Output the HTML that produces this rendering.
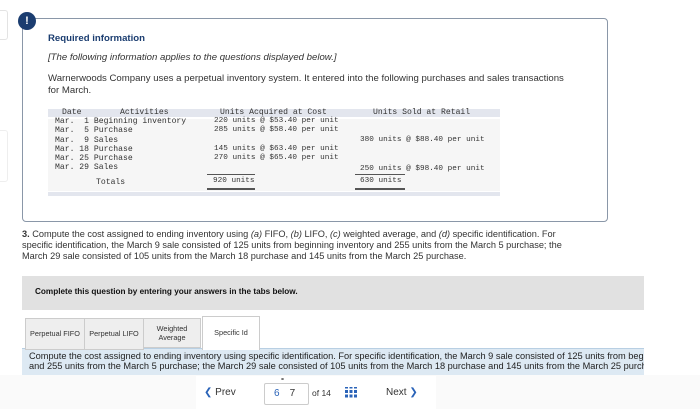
<!DOCTYPE html>
<html><head><style>
body{margin:0;width:700px;height:409px;background:#fff;position:relative;overflow:hidden;font-family:"Liberation Sans",sans-serif;color:#333}
.a{position:absolute}
.m{font-family:"Liberation Mono",monospace;font-size:8.1px;color:#333;white-space:pre}
.t{font-size:9.6px;color:#333}
</style></head><body>
<div class="a" style="left:-4px;top:10px;width:10px;height:28px;border:1px solid #e3e3e3;border-radius:3px"></div>
<div class="a" style="left:-4px;top:130px;width:10px;height:50px;border:1px solid #eee;border-radius:3px"></div>
<div class="a" style="left:22px;top:18px;width:584px;height:202px;border:1px solid #8a97a8;border-radius:4px"></div>
<div class="a" style="left:18px;top:12px;width:18px;height:18px;border-radius:50%;background:#1b3d70;color:#fff;font-weight:bold;font-size:11px;text-align:center;line-height:18px">!</div>
<div class="a" style="left:48px;top:33px;font-size:9.6px;font-weight:bold;color:#1b3d70">Required information</div>
<div class="a t" style="left:48px;top:52px;font-style:italic">[The following information applies to the questions displayed below.]</div>
<div class="a t" style="left:48px;top:73px;width:545px;line-height:11.5px;white-space:nowrap">Warnerwoods Company uses a perpetual inventory system. It entered into the following purchases and sales transactions<br>for March.</div>
<div class="a" style="left:48px;top:109px;width:452px;height:8px;background:#e3e6ee"></div>
<div class="a" style="left:48px;top:119px;width:452px;height:72px;background:#f6f6f6"></div>
<div class="a" style="left:48px;top:192px;width:452px;height:4px;background:#e3e6ee"></div>
<div class="a m" style="left:62px;top:108px">Date</div>
<div class="a m" style="left:120px;top:108px">Activities</div>
<div class="a m" style="left:220px;top:108px">Units Acquired at Cost</div>
<div class="a m" style="left:373px;top:108px">Units Sold at Retail</div>
<div class="a m" style="left:55px;top:117px;line-height:9.3px">Mar.  1 Beginning inventory
Mar.  5 Purchase
Mar.  9 Sales
Mar. 18 Purchase
Mar. 25 Purchase
Mar. 29 Sales</div>
<div class="a m" style="left:96px;top:178px">Totals</div>
<div class="a m" style="left:214px;top:117px;line-height:9.3px;font-size:7.7px">220 units @ $53.40 per unit
285 units @ $58.40 per unit

145 units @ $63.40 per unit
270 units @ $65.40 per unit</div>
<div class="a m" style="left:360px;top:136px;font-size:7.7px">380 units @ $88.40 per unit</div>
<div class="a m" style="left:360px;top:165px;font-size:7.7px">250 units @ $98.40 per unit</div>
<div class="a" style="left:355px;top:174px;width:50px;border-top:1px solid #555"></div>
<div class="a" style="left:207px;top:174px;width:48px;border-top:1px solid #555"></div>
<div class="a m" style="left:213px;top:177px;font-size:7.7px">920 units</div>
<div class="a m" style="left:360px;top:177px;font-size:7.7px">630 units</div>
<div class="a" style="left:207px;top:188px;width:48px;border-top:2px solid #555"></div>
<div class="a" style="left:355px;top:188px;width:50px;border-top:2px solid #555"></div>
<div class="a t" style="left:22px;top:229px;width:590px;line-height:11px;font-size:9.2px"><b>3.</b> Compute the cost assigned to ending inventory using <i>(a)</i> FIFO, <i>(b)</i> LIFO, <i>(c)</i> weighted average, and <i>(d)</i> specific identification. For<br>specific identification, the March 9 sale consisted of 125 units from beginning inventory and 255 units from the March 5 purchase; the<br>March 29 sale consisted of 105 units from the March 18 purchase and 145 units from the March 25 purchase.</div>
<div class="a" style="left:22px;top:276px;width:622px;height:34px;background:#e1e1e1"></div>
<div class="a" style="left:35px;top:287px;font-size:8.2px;font-weight:bold;color:#111">Complete this question by entering your answers in the tabs below.</div>
<div class="a" style="left:22px;top:348px;width:622px;height:26px;background:#dde9f3;border-top:1px solid #b8cfe3"></div>
<div class="a" style="left:25px;top:318px;width:58px;height:30px;background:#eee;border:1px solid #ccc;font-size:7.3px;text-align:center;line-height:30px;white-space:nowrap">Perpetual FIFO</div>
<div class="a" style="left:84px;top:318px;width:58px;height:30px;background:#eee;border:1px solid #ccc;font-size:7.3px;text-align:center;line-height:30px;white-space:nowrap">Perpetual LIFO</div>
<div class="a" style="left:143px;top:318px;width:58px;height:30px;background:#eee;border:1px solid #ccc;font-size:7.3px;text-align:center;line-height:9px;box-sizing:border-box;padding-top:5px">Weighted<br>Average</div>
<div class="a" style="left:202px;top:316px;width:56px;height:33px;background:#fff;border:1px solid #ccc;border-bottom:none;font-size:7.3px;text-align:center;line-height:32px">Specific Id</div>
<div class="a" style="left:0;top:351px;width:644px;height:22px;overflow:hidden"><div style="margin-left:29px;font-size:8.9px;line-height:10px;white-space:nowrap;color:#222;transform:scaleX(1.04);transform-origin:0 0">Compute the cost assigned to ending inventory using specific identification. For specific identification, the March 9 sale consisted of 125 units from beginning<br>and 255 units from the March 5 purchase; the March 29 sale consisted of 105 units from the March 18 purchase and 145 units from the March 25 purchase.</div></div>
<div class="a" style="left:0;top:375px;width:700px;height:34px;background:#fafafa"></div>
<div class="a" style="left:196px;top:376px;width:240px;height:33px;background:#fff"></div>
<div class="a" style="left:204px;top:387px;font-size:10px;color:#333"><span style="color:#2a63b8">❮</span> Prev</div>
<div class="a" style="left:264px;top:383px;width:43px;height:20px;border:1px solid #ccc;border-radius:2px;font-size:10px;line-height:20px"><span style="color:#2a63b8;margin-left:9px">6</span><span style="margin-left:10px">7</span></div>
<div class="a" style="left:280px;top:376px;font-size:6px;color:#666">⚭</div>
<div class="a" style="left:312px;top:388px;font-size:8.5px">of 14</div>
<div class="a" style="left:345px;top:387px;width:12px;height:12px;background:repeating-linear-gradient(90deg,#2a63b8 0 3px,transparent 3px 4.5px)"></div>
<div class="a" style="left:345px;top:387px;width:12px;height:12px;background:repeating-linear-gradient(0deg,#fff 0 1.5px,transparent 1.5px 4.5px)"></div>
<div class="a" style="left:386px;top:387px;font-size:10px">Next <span style="color:#2a63b8">❯</span></div>
</body></html>
